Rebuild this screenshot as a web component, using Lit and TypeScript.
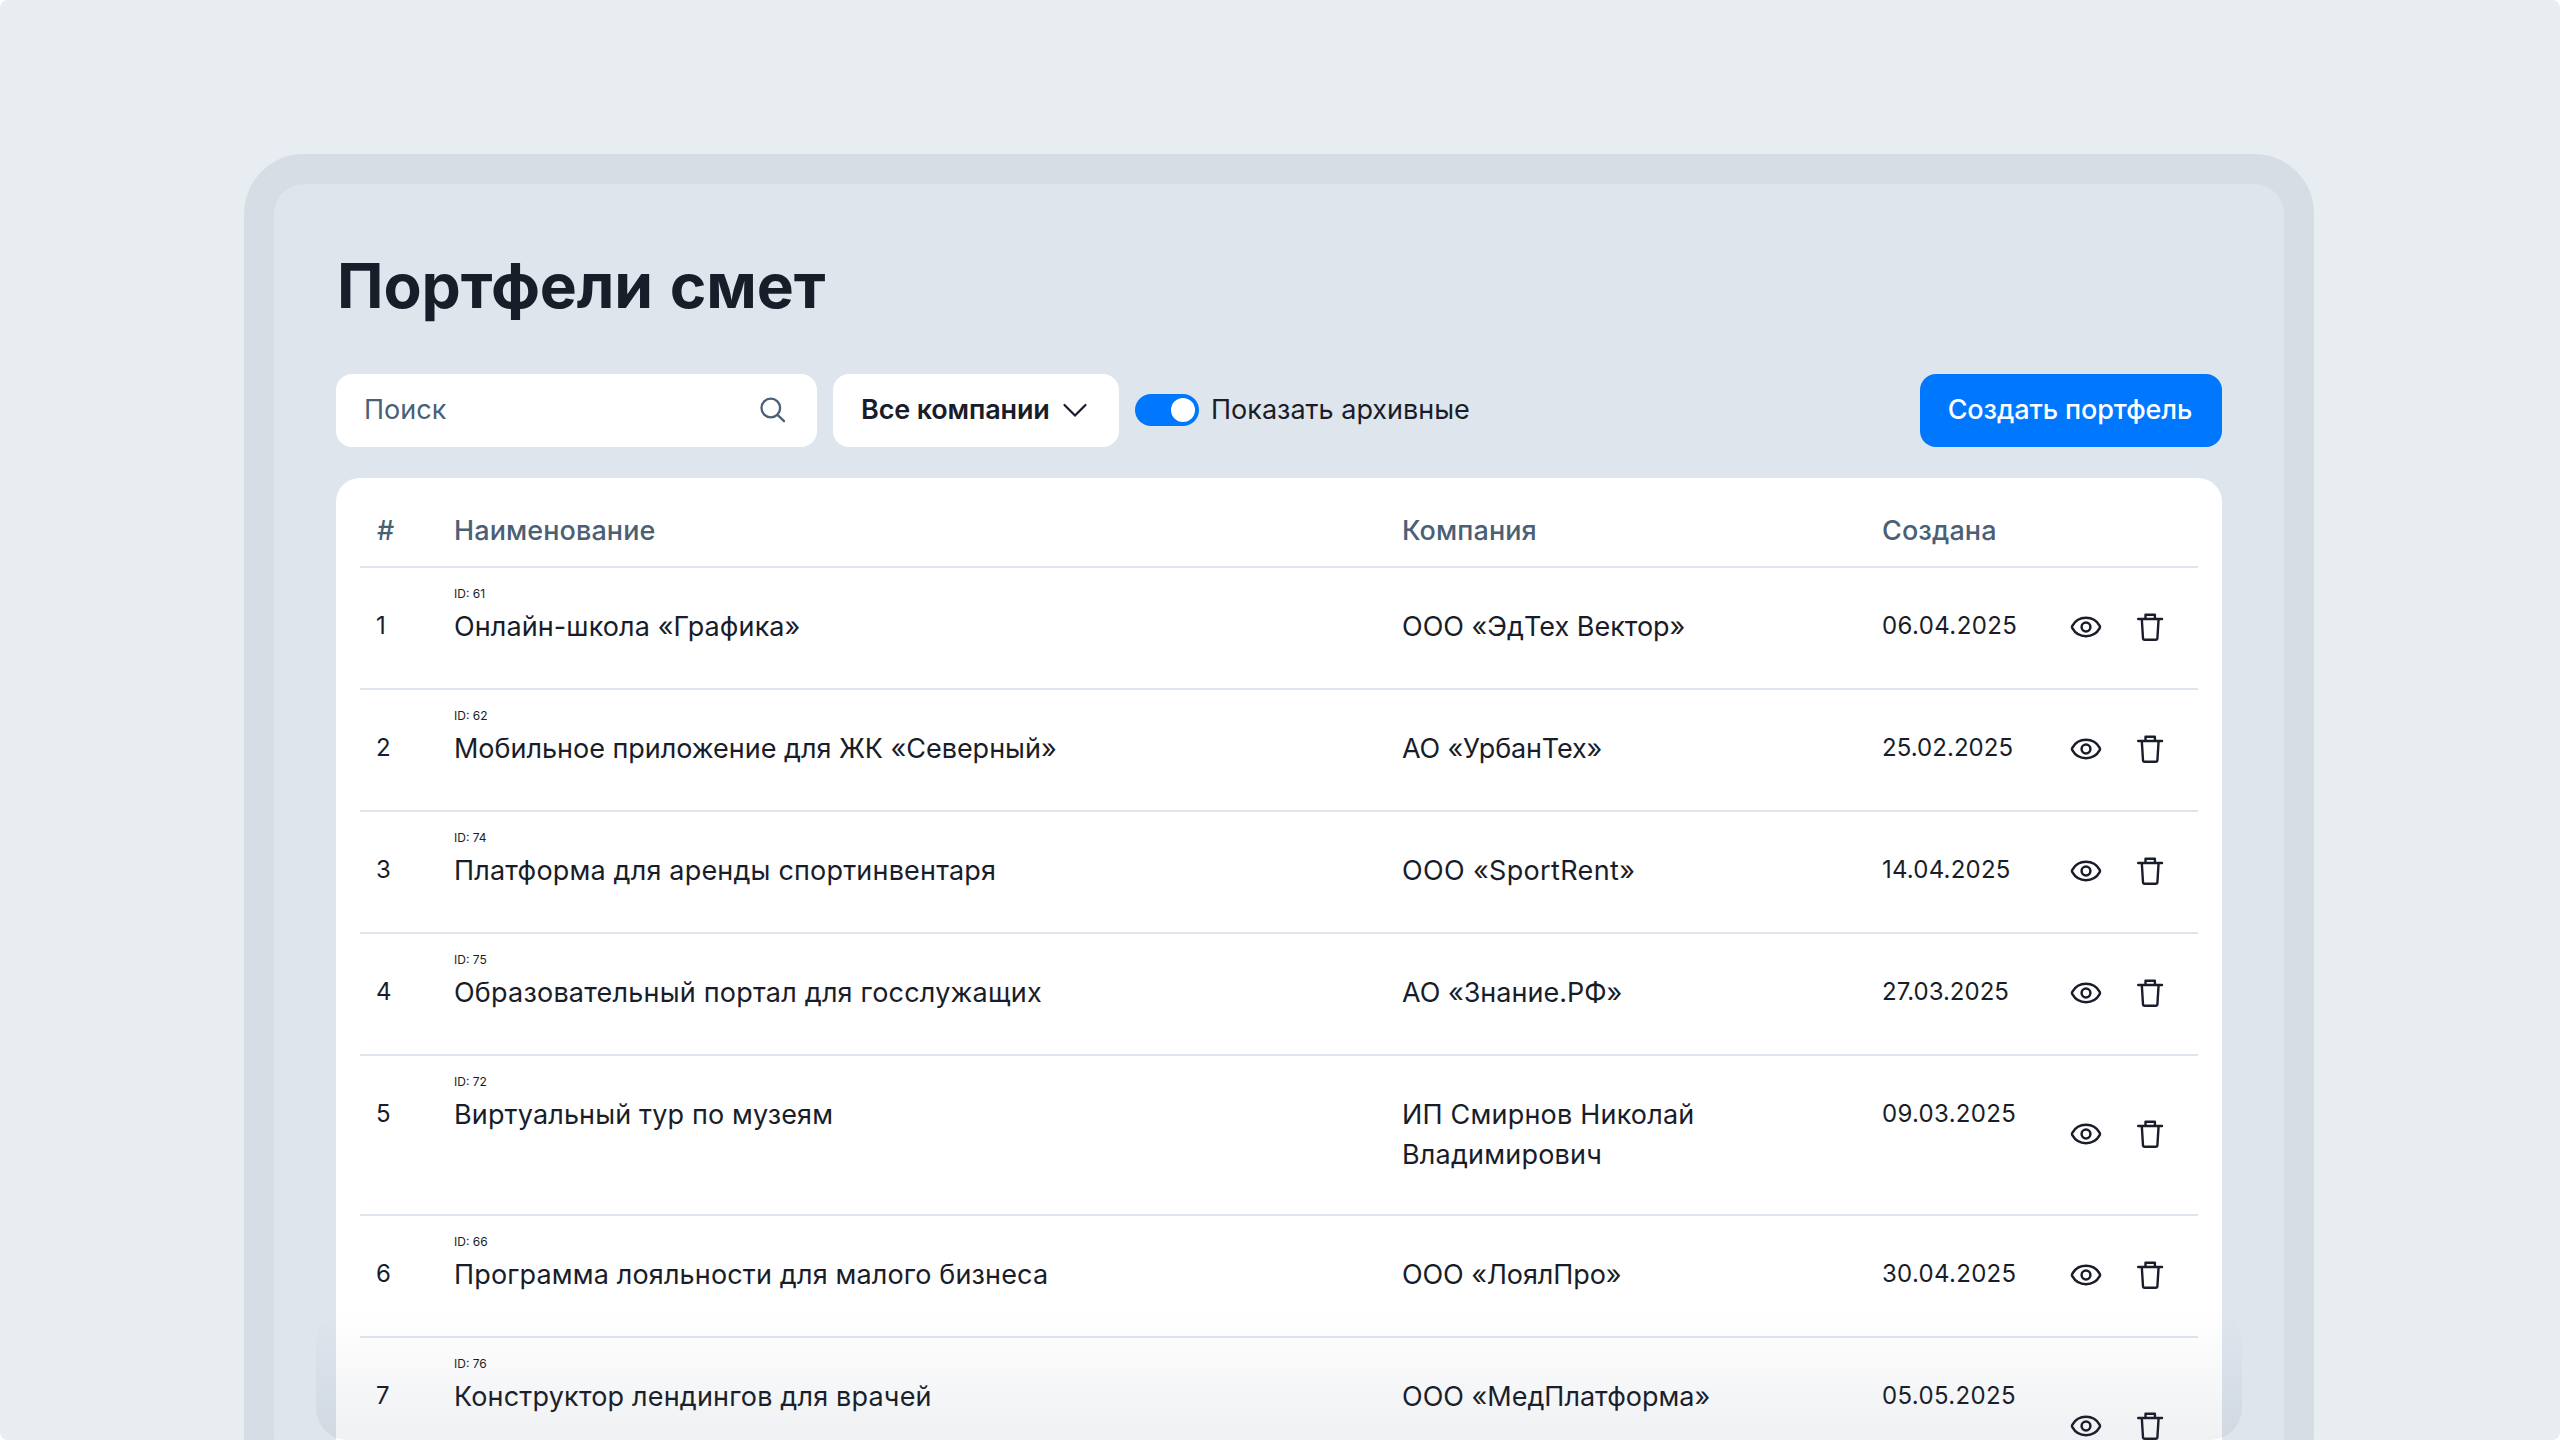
import { LitElement, html, css, svg } from "lit";
import { customElement, property, state } from "lit/decorators.js";
import { styleMap } from "lit/directives/style-map.js";

interface Portfolio {
  id: number;
  name: string;
  company: string;
  created: string;
  /** Letter spacing in px for the name, company and date. */
  tracking: [number, number, number];
}

const PORTFOLIOS: Portfolio[] = [
  { id: 61, name: "Онлайн-школа «Графика»", company: "ООО «ЭдТех Вектор»", created: "06.04.2025", tracking: [0.1, 0, 0.4] },
  { id: 62, name: "Мобильное приложение для ЖК «Северный»", company: "АО «УрбанТех»", created: "25.02.2025", tracking: [-0.02, -0.15, 0.05] },
  { id: 74, name: "Платформа для аренды спортинвентаря", company: "ООО «SportRent»", created: "14.04.2025", tracking: [0.18, 0.35, 0.2] },
  { id: 75, name: "Образовательный портал для госслужащих", company: "АО «Знание.РФ»", created: "27.03.2025", tracking: [0.21, 0, 0] },
  { id: 72, name: "Виртуальный тур по музеям", company: "ИП Смирнов Николай Владимирович", created: "09.03.2025", tracking: [0.14, 0.2, 0.3] },
  { id: 66, name: "Программа лояльности для малого бизнеса", company: "ООО «ЛоялПро»", created: "30.04.2025", tracking: [0.15, -0.1, 0.3] },
  { id: 76, name: "Конструктор лендингов для врачей", company: "ООО «МедПлатформа»", created: "05.05.2025", tracking: [0.18, 0, 0.35] },
];

const searchIcon = html`<svg class="search-icon" width="28" height="28" viewBox="0 0 28 28" fill="none" stroke="currentColor" stroke-width="2.3" stroke-linecap="round">
  ${svg`<circle cx="12.8" cy="12" r="9.3"/><path d="M19.5 18.9 26 25.2"/>`}
</svg>`;

const chevronIcon = html`<svg width="26" height="16" viewBox="0 0 26 16" fill="none" stroke="currentColor" stroke-width="2.2" stroke-linecap="round" stroke-linejoin="round">
  ${svg`<path d="M2.5 3 13 13.6 23.5 3"/>`}
</svg>`;

const eyeIcon = html`<svg width="34" height="32" viewBox="0 0 34 32" fill="none" stroke="currentColor" stroke-width="2.5">
  ${svg`<path d="M3.3 13.8C6 9 11 5.8 17 5.8S28 9 30.7 13.8Q31.4 15 30.7 16.2C28 21 23 24.2 17 24.2S6 21 3.3 16.2Q2.6 15 3.3 13.8Z"/><circle cx="17" cy="15" r="4.4"/>`}
</svg>`;

const trashIcon = html`<svg width="32" height="32" viewBox="0 0 32 32" fill="none" stroke="currentColor" stroke-width="2.4" stroke-linecap="round" stroke-linejoin="round">
  ${svg`<path d="M4.2 7h23.8M11.5 7V2.8h9.4V7M7.8 7l1.2 19.2q.1 1.6 1.7 1.6h11q1.6 0 1.7-1.6L24.6 7"/>`}
</svg>`;

const spacing = (px: number) => styleMap({ letterSpacing: `${px}px` });

@customElement("portfolio-row")
class PortfolioRow extends LitElement {
  @property({ type: Number }) index = 0;
  @property({ attribute: false }) item!: Portfolio;

  static styles = css`
    :host {
      display: grid;
      grid-template-columns: 78px 948px 480px 187px auto;
      align-items: start;
      min-height: 120px;
      padding-left: 16px;
      border-bottom: 2px solid #dfe5ee;
    }
    .number,
    .date {
      padding-top: 38px;
      font-size: 24px;
      line-height: 40px;
    }
    .id {
      padding-top: 18px;
      height: 20px;
      box-sizing: border-box;
      font-size: 12px;
      line-height: 16px;
    }
    .name {
      padding-top: 19px;
      line-height: 40px;
    }
    .company {
      padding: 39px 0;
      width: 360px;
      line-height: 40px;
    }
    .actions {
      display: flex;
      align-items: center;
      align-self: center;
      gap: 31px;
    }
    .actions svg {
      display: block;
    }
  `;

  render() {
    const { id, name, company, created, tracking } = this.item;
    return html`
      <div class="number">${this.index}</div>
      <div>
        <div class="id">ID: ${id}</div>
        <div class="name" style=${spacing(tracking[0])}>${name}</div>
      </div>
      <div class="company" style=${spacing(tracking[1])}>${company}</div>
      <div class="date" style=${spacing(tracking[2])}>${created}</div>
      <div class="actions">${eyeIcon}${trashIcon}</div>
    `;
  }
}

@customElement("app-root")
class AppRoot extends LitElement {
  @state() private showArchived = true;

  static styles = css`
    :host {
      display: block;
      background: #fff;
      font-family: Inter, "Liberation Sans", sans-serif;
      font-size: 27px;
      color: #191d29;
    }
    .page {
      position: relative;
      box-sizing: border-box;
      height: 1440px;
      padding: 154px 246px 0 244px;
      border-radius: 8px;
      background: #e8edf1;
      overflow: hidden;
    }
    .frame {
      box-sizing: border-box;
      height: 1340px;
      padding: 62px 62px 0;
      border: 30px solid #d6dde4;
      border-radius: 60px;
      background: #dee5ed;
    }
    .title {
      margin: 0 0 0 1px;
      font-size: 62.3px;
      font-weight: 700;
      line-height: 80px;
      letter-spacing: -0.1px;
      word-spacing: 2px;
    }
    .toolbar {
      display: flex;
      align-items: center;
      height: 73px;
      margin-top: 47.5px;
    }
    .search,
    .select,
    .create {
      display: flex;
      align-items: center;
      box-sizing: border-box;
      height: 73px;
      border-radius: 16px;
      background: #fff;
    }
    .label {
      padding-bottom: 2px;
    }
    .search {
      justify-content: space-between;
      width: 481px;
      padding: 0 31px 0 28px;
      color: #4b5f75;
    }
    .select {
      justify-content: space-between;
      width: 286px;
      margin-left: 16px;
      padding: 0 31px 0 28px;
      font-weight: 600;
      letter-spacing: -0.15px;
    }
    .toggle {
      display: flex;
      justify-content: flex-end;
      box-sizing: border-box;
      width: 64px;
      height: 32px;
      margin-left: 16px;
      padding: 4px;
      border-radius: 16px;
      background: #0077ff;
    }
    .knob {
      width: 24px;
      height: 24px;
      border-radius: 50%;
      background: #fff;
    }
    .toggle-label {
      margin-left: 12px;
    }
    .create {
      justify-content: center;
      width: 302px;
      margin-left: auto;
      padding-right: 2px;
      background: #0077ff;
      color: #fff;
      font-weight: 500;
      letter-spacing: -0.1px;
    }
    .card {
      box-sizing: border-box;
      height: 1000px;
      margin-top: 31.5px;
      padding: 0 24px;
      border-radius: 24px;
      background: #fff;
    }
    .head {
      display: grid;
      grid-template-columns: 77px 948px 480px 188px auto;
      box-sizing: border-box;
      height: 90px;
      padding: 33px 0 0 17px;
      border-bottom: 2px solid #dfe5ee;
      line-height: 40px;
      font-weight: 500;
      letter-spacing: 0.1px;
      color: #4b5f75;
    }
    .tall {
      min-height: 178px;
    }
    .shade {
      position: absolute;
      left: 316px;
      top: 1311px;
      width: 1926px;
      height: 128.5px;
      border-radius: 32px;
      background: linear-gradient(rgba(55, 75, 110, 0), rgba(58, 72, 105, 0.08));
    }
  `;

  render() {
    return html`
      <div class="page">
        <main class="frame">
          <h1 class="title">Портфели смет</h1>
          <div class="toolbar">
            <div class="search"><span class="label">Поиск</span>${searchIcon}</div>
            <div class="select"><span class="label">Все компании</span>${chevronIcon}</div>
            <div class="toggle" role="switch" aria-checked=${this.showArchived ? "true" : "false"}><div class="knob"></div></div>
            <span class="label toggle-label">Показать архивные</span>
            <div class="create" role="button"><span class="label">Создать портфель</span></div>
          </div>
          <section class="card">
            <div class="head">
              <span>#</span><span>Наименование</span><span>Компания</span><span>Создана</span>
            </div>
            ${PORTFOLIOS.map(
              (p, i) => html`<portfolio-row class=${i === PORTFOLIOS.length - 1 ? "tall" : ""} .index=${i + 1} .item=${p}></portfolio-row>`
            )}
          </section>
        </main>
        <div class="shade"></div>
      </div>
    `;
  }
}
